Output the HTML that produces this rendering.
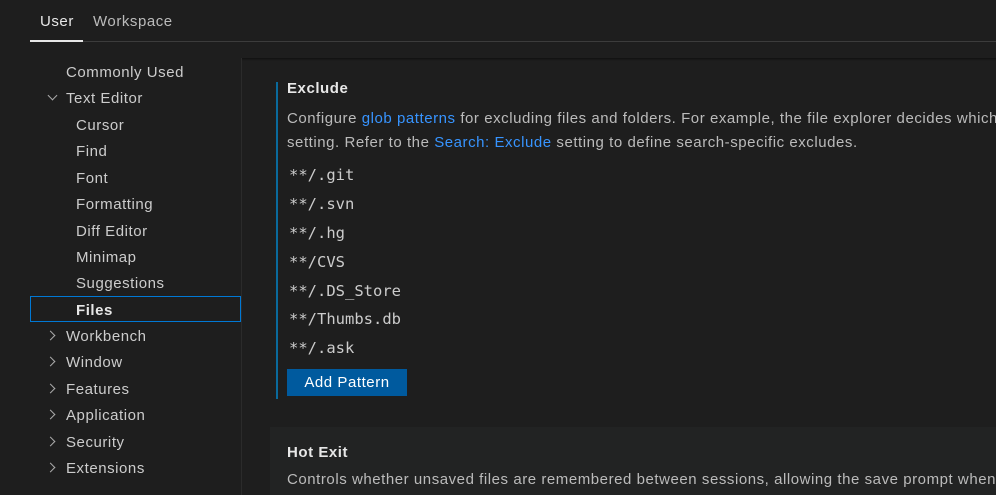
<!DOCTYPE html><html><head><style>
body{margin:0;width:996px;height:495px;background:#1e1e1e;overflow:hidden;font-family:"Liberation Sans",sans-serif;color:#ccc;position:relative;letter-spacing:.55px}
.a{position:absolute;white-space:nowrap}
.tab{top:13px;font-size:15px}
.nav{font-size:15px;color:#cccccc;line-height:26.4px}
.chev{position:absolute;width:6px;height:6px;border-right:1.2px solid #aaa;border-bottom:1.2px solid #aaa}
.m{font-family:"DejaVu Sans Mono",monospace;font-size:15.5px;color:#ccc;left:289px;letter-spacing:0}
a{color:#3794ff;text-decoration:none}
</style></head><body>
<div class="a tab" style="left:40px;color:#e7e7e7">User</div>
<div class="a tab" style="left:93px;color:#bbb">Workspace</div>
<div class="a" style="left:30px;top:40px;width:53px;height:2px;background:#e7e7e7"></div>
<div class="a" style="left:83px;top:41px;width:913px;height:1px;background:#3c3c3c"></div>
<div class="a" style="left:241px;top:58px;width:1px;height:437px;background:#2b2b2b"></div>
<div class="a" style="left:242px;top:58px;width:754px;height:3px;background:linear-gradient(#111,#1e1e1e)"></div>
<div class="a nav" style="left:66px;top:60px">Commonly Used<br>Text Editor</div>
<div class="chev" style="left:49px;top:92px;transform:rotate(45deg)"></div>
<div class="a nav" style="left:76px;top:113px">Cursor<br>Find<br>Font<br>Formatting<br>Diff Editor<br>Minimap<br>Suggestions<br><b style="color:#e7e7e7">Files</b></div>
<div class="a" style="left:30px;top:296px;width:209px;height:24px;border:1px solid #0078d4"></div>
<div class="a nav" style="left:66px;top:324px">Workbench<br>Window<br>Features<br>Application<br>Security<br>Extensions</div>
<div class="chev" style="left:47px;top:332px;transform:rotate(-45deg)"></div>
<div class="chev" style="left:47px;top:358px;transform:rotate(-45deg)"></div>
<div class="chev" style="left:47px;top:385px;transform:rotate(-45deg)"></div>
<div class="chev" style="left:47px;top:411px;transform:rotate(-45deg)"></div>
<div class="chev" style="left:47px;top:438px;transform:rotate(-45deg)"></div>
<div class="chev" style="left:47px;top:464px;transform:rotate(-45deg)"></div>
<div class="a" style="left:276px;top:82px;width:2px;height:317px;background:#0a6a9c"></div>
<div class="a" style="left:287px;top:80px;font-size:15px;font-weight:bold;color:#e7e7e7">Exclude</div>
<div class="a" style="left:287px;top:107px;font-size:15px;line-height:24px;color:#bbb">Configure <a>glob patterns</a> for excluding files and folders. For example, the file explorer decides which<br>setting. Refer to the <a>Search: Exclude</a> setting to define search-specific excludes.</div>
<div class="a m" style="top:166px">**/.git</div>
<div class="a m" style="top:195px">**/.svn</div>
<div class="a m" style="top:224px">**/.hg</div>
<div class="a m" style="top:253px">**/CVS</div>
<div class="a m" style="top:282px">**/.DS_Store</div>
<div class="a m" style="top:310px">**/Thumbs.db</div>
<div class="a m" style="top:339px">**/.ask</div>
<div class="a" style="left:287px;top:369px;width:120px;height:27px;background:#005a9e;color:#fff;font-size:15px;text-align:center;line-height:28px">Add Pattern</div>
<div class="a" style="left:270px;top:427px;width:726px;height:68px;background:#222323"></div>
<div class="a" style="left:287px;top:444px;font-size:15px;font-weight:bold;color:#e7e7e7">Hot Exit</div>
<div class="a" style="left:287px;top:471px;font-size:15px;color:#bbb">Controls whether unsaved files are remembered between sessions, allowing the save prompt when</div>
</body></html>
